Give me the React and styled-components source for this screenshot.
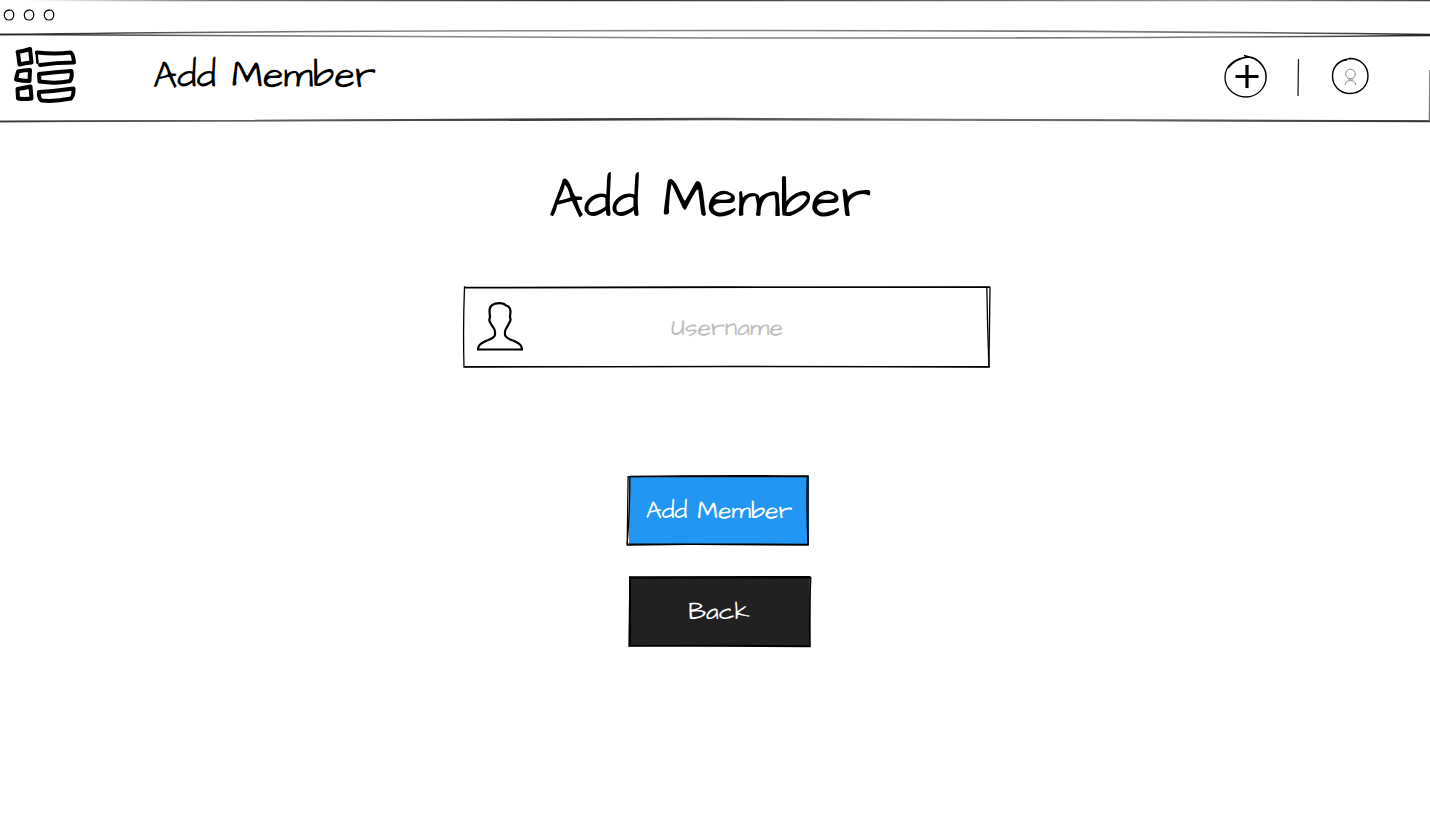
import React from "react";
import styled, { createGlobalStyle } from "styled-components";

const GlobalStyle = createGlobalStyle`
  * { box-sizing: border-box; }
  body {
    margin: 0;
    background: #fff;
    color: #000;
    font-family: "Architects Daughter", Lato, sans-serif;
  }
`;

const Page = styled.div`
  display: flex;
  flex-direction: column;
  min-height: 100vh;
  overflow-x: hidden;
`;

const Sketch = styled.svg`
  position: absolute;
  inset: 0;
  width: 100%;
  height: 100%;
  overflow: visible;
  pointer-events: none;
  fill: none;
  stroke: #000;
  stroke-width: ${(p) => p.$weight || 1.3};
  path { vector-effect: non-scaling-stroke; }
`;

const WindowBar = styled.div`
  position: relative;
  display: flex;
  align-items: center;
  gap: 8px;
  height: 35px;
  padding: 0 3px 5px;
`;

const Dot = styled.svg`
  width: 12px;
  height: 12px;
  fill: none;
  stroke: #000;
  stroke-width: 1.2;
`;

const Header = styled.header`
  position: relative;
  display: flex;
  align-items: center;
  height: 87px;
  padding: 0 61px 6px 13px;
`;

const IconButton = styled.button`
  display: flex;
  flex: none;
  padding: 0;
  border: 0;
  background: none;
  cursor: pointer;
  svg {
    width: ${(p) => p.$w}px;
    height: ${(p) => p.$h}px;
    overflow: visible;
    fill: none;
    stroke: #000;
    stroke-linejoin: round;
  }
`;

const HeaderTitle = styled.div`
  flex: 1;
  margin-left: 75px;
  font-size: 38px;
  line-height: 46px;
`;

const Tools = styled.div`
  display: flex;
  align-items: center;
  gap: 28px;
`;

const Divider = styled.svg`
  width: 8px;
  height: 42px;
  fill: none;
  stroke: #222;
  stroke-width: 1.3;
`;

const Main = styled.main`
  display: flex;
  flex-direction: column;
  align-items: center;
  padding: 46px 16px;
`;

const Heading = styled.h1`
  margin: 0;
  padding-right: 10px;
  font-size: 55px;
  font-weight: 400;
  line-height: 64px;
`;

const Form = styled.form`
  display: flex;
  flex-direction: column;
  align-items: center;
  width: 100%;
  margin-top: 55px;
`;

const FieldRow = styled.div`
  display: flex;
  justify-content: center;
  width: 100%;
  padding-left: 24px;
`;

const Field = styled.label`
  position: relative;
  width: 100%;
  max-width: 526px;
  height: 80px;
`;

const FieldIcon = styled.svg`
  position: absolute;
  left: 13px;
  top: 15px;
  width: 46px;
  height: 50px;
  fill: none;
  stroke: #000;
  stroke-width: 2.2;
`;

const TextInput = styled.input`
  width: 100%;
  height: 100%;
  padding: 0 64px;
  border: 0;
  background: transparent;
  font: inherit;
  font-size: 25px;
  text-align: center;
  outline: none;
  &::placeholder { color: #bdbdbd; opacity: 1; }
`;

const Actions = styled.div`
  display: flex;
  flex-direction: column;
  gap: 32px;
  margin-top: 109px;
  padding-left: 8px;
`;

const ActionButton = styled.button`
  position: relative;
  width: 180px;
  height: 69px;
  padding: 0;
  border: 0;
  background: ${(p) => p.$fill};
  color: #fff;
  font: inherit;
  font-size: 25px;
  cursor: pointer;
`;

function RoughBox({ d }) {
  return (
    <Sketch viewBox="0 0 100 100" preserveAspectRatio="none" aria-hidden="true">
      {d.map((path) => <path key={path} d={path} />)}
    </Sketch>
  );
}

function PencilGradient({ id, stops }) {
  return (
    <linearGradient id={id} gradientUnits="userSpaceOnUse" x1="0" y1="0" x2="1430" y2="0">
      {stops.map(([offset, color]) => <stop key={offset} offset={offset} stopColor={color} />)}
    </linearGradient>
  );
}

function WindowDot() {
  return (
    <Dot viewBox="0 0 12 12" aria-hidden="true">
      <path d="M5.5 .8C8.8.6 11 3 10.8 6 10.6 9 8.6 11 6 11 3 11 1.2 8.800 1.300 5.800 1.400 3.200 3.200 1 7 1.200" />
    </Dot>
  );
}

export default function App() {
  return (
    <Page>
      <GlobalStyle />
      <WindowBar>
        <WindowDot />
        <WindowDot />
        <WindowDot />
        <Sketch $weight={1.6} viewBox="0 0 1430 35" preserveAspectRatio="none" aria-hidden="true">
          <defs>
            <PencilGradient id="edge" stops={[[0.02, "#fff"], [0.15, "#777"], [0.4, "#333"], [0.6, "#555"], [0.85, "#999"], [1, "#444"]]} />
            <PencilGradient id="rule" stops={[[0, "#222"], [0.15, "#666"], [0.3, "#888"], [0.85, "#777"], [1, "#222"]]} />
          </defs>
          <path stroke="url(#edge)" d="M30 0.500L1430 0.510" />
          <path stroke="url(#rule)" d="M0 34.500Q300 30.500 715 30.500T1430 34.500" />
          <path stroke="url(#rule)" d="M0 34.500Q300 37.500 715 38T1430 35.500" />
        </Sketch>
      </WindowBar>
      <Header>
        <IconButton $w={65} $h={60} type="button" aria-label="Menu">
          <svg viewBox="13 45 65 60" strokeWidth="4" strokeLinecap="round" aria-hidden="true">
            <path d="M17.500 51Q24 50 30 48L31.500 61.500Q25 62 19.500 63.500L18 52" />
            <path d="M37 51.500Q55 53.500 70.500 51.500Q73 52 74 61.500Q56 61.500 40 64" />
            <path d="M36.500 51L37.500 62" strokeWidth="2.500" />
            <path d="M18 70.500Q24 69 30 69L29.500 80Q22 80 16 78.500Z" />
            <path d="M39 73Q56 71 71.500 70Q72.500 76 70 80Q56 83 39.500 80.500Z" />
            <path d="M17.500 88Q24 87 30.500 85.500L31.500 97.500Q24 98.500 18 97.500Z" />
            <path d="M39 91Q56 90 73.500 87.500Q74 94 71 97.500Q54 101 41.500 99.500Q38.500 97 39 91Z" />
          </svg>
        </IconButton>
        <HeaderTitle>Add Member</HeaderTitle>
        <Tools>
          <IconButton $w={44} $h={44} type="button" aria-label="Add">
            <svg viewBox="-1 -1 44 44" aria-hidden="true">
              <path strokeWidth="1.300" d="M22 2C33 1 42 11 42 22S33 42 22 42 1 34 1 22.500 10 3 25 2Q36 4 41.500 16Q44 27 38 34M4 13Q12 3 25 2M20 .5L29 3" />
              <path strokeWidth="3.200" d="M23 10V33M11.500 21.500H34.500" />
            </svg>
          </IconButton>
          <Divider viewBox="0 0 8 42" aria-hidden="true">
            <path d="M3.500 4L3 41" />
          </Divider>
          <IconButton $w={38} $h={38} type="button" aria-label="Profile">
            <svg viewBox="0 0 38 38" aria-hidden="true">
              <path strokeWidth="1.400" d="M18 1.500C29 1 37 9 37 19S29 36.500 19 36.500 1.500 29 1.500 19 9 2.500 20 1.500M5 8Q10 3 16 3" />
              <g stroke="#888" strokeWidth="1">
                <circle cx="19.500" cy="17" r="4.800" />
                <path d="M17 22H22M14 28Q15 23.500 19.500 23.500T25 28" />
              </g>
            </svg>
          </IconButton>
        </Tools>
        <Sketch $weight={1.6} viewBox="0 0 1430 87" preserveAspectRatio="none" aria-hidden="true">
          <defs>
            <PencilGradient id="base" stops={[[0, "#333"], [0.15, "#666"], [0.4, "#333"], [0.65, "#777"], [0.85, "#555"], [1, "#333"]]} />
          </defs>
          <path stroke="url(#base)" d="M0 86.500Q360 83.500 715 83.500T1430 86.500" />
          <path stroke="url(#base)" d="M0 86.500Q400 84.500 715 84.500T1430 86" />
          <path stroke="#777" d="M1430 35L1429.500 86" />
        </Sketch>
      </Header>
      <Main>
        <Heading>Add Member</Heading>
        <Form onSubmit={(e) => e.preventDefault()}>
          <FieldRow>
            <Field>
              <TextInput type="text" placeholder="Username" aria-label="Username" />
              <FieldIcon viewBox="0 0 46 50" aria-hidden="true">
                <path d="M22.500 1.200C16 1.200 12.500 4 12.500 9L13 15.500Q11.500 18.500 13.500 21C15 24.500 18 27 18 29.500V33C17 37 10 38 6 40.500 2 42.500 1 45 1 47.500H45C45 45 44 42.500 40 40.500 36 38 29 37 28 33V29.500C28 27 31 24.500 32 21Q34.500 18 33 15.500L33.500 9C33 5.500 32 4 29 3.500Q27 1.200 22.500 1.200Z" />
              </FieldIcon>
              <RoughBox d={["M0 0.500Q50 -0.500 100 0.500L99.800 100Q50 98.500 0 100Q-0.200 50 0.100 -1", "M0 1L100 0M99.400 0.500Q99.500 50 99.800 100M0.200 99.500H100"]} />
            </Field>
          </FieldRow>
          <Actions>
            <ActionButton type="submit" $fill="#2196f3">
              Add Member
              <RoughBox d={["M-0.500 1Q50 -1.500 99.500 0L99.500 99Q50 98 -1 100Z", "M0.500 0.500L99 1Q98.500 50 99.500 100L-1 98.500Q0.500 50 0.500 1"]} />
            </ActionButton>
            <ActionButton type="button" $fill="#212121">
              Back
              <RoughBox d={["M0.500 0Q50 -0.500 100.500 -0.500L100.500 100Q50 98.500 0 100Z", "M1 1.500L101 1Q100 50 100.500 101L0.500 99.500Q1 50 0.500 -1"]} />
            </ActionButton>
          </Actions>
        </Form>
      </Main>
    </Page>
  );
}
